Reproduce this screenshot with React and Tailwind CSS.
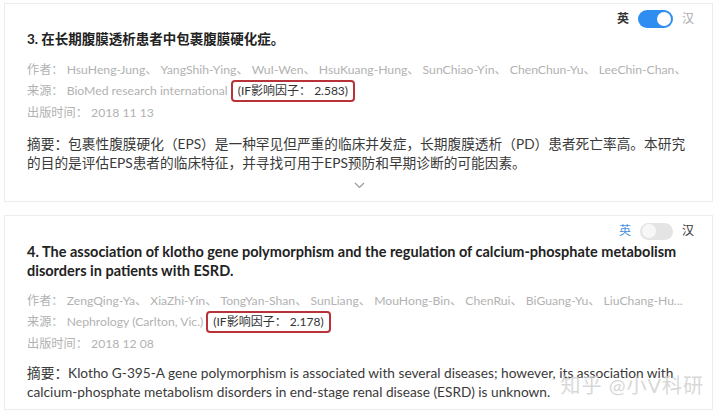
import React from "react";

// Shared font stacks
const FONT = { fontFamily: '"Lato", "Noto Sans CJK SC", sans-serif' };

// Papers shown in the list
const papers = [
  {
    titleLines: ["3. 在长期腹膜透析患者中包裹腹膜硬化症。"],
    titleSize: "text-[13.5px]",
    authors:
      "HsuHeng-Jung、 YangShih-Ying、 WuI-Wen、 HsuKuang-Hung、 SunChiao-Yin、 ChenChun-Yu、 LeeChin-Chan、",
    source: "BioMed research international",
    impact: "2.583",
    date: "2018 11 13",
    abstractLines: [
      "摘要：包裹性腹膜硬化（EPS）是一种罕见但严重的临床并发症，长期腹膜透析（PD）患者死亡率高。本研究",
      "的目的是评估EPS患者的临床特征，并寻找可用于EPS预防和早期诊断的可能因素。",
    ],
    abstractGap: "mt-[11px]",
    bottom: "pb-[12px]",
    english: true,
    expandable: true,
  },
  {
    titleLines: [
      "4. The association of klotho gene polymorphism and the regulation of calcium-phosphate metabolism",
      "disorders in patients with ESRD.",
    ],
    titleSize: "text-[14.5px]",
    authors:
      "ZengQing-Ya、 XiaZhi-Yin、 TongYan-Shan、 SunLiang、 MouHong-Bin、 ChenRui、 BiGuang-Yu、 LiuChang-Hu...",
    source: "Nephrology (Carlton, Vic.)",
    impact: "2.178",
    date: "2018 12 08",
    abstractLines: [
      "摘要：Klotho G-395-A gene polymorphism is associated with several diseases; however, its association with",
      "calcium-phosphate metabolism disorders in end-stage renal disease (ESRD) is unknown.",
    ],
    abstractGap: "mt-[9px]",
    bottom: "pb-[8px]",
    english: false,
    expandable: false,
  },
];

function LangToggle({ on }) {
  return (
    <div className="flex items-center justify-end gap-[9px] pr-[18px] h-[18px] text-[12px]">
      <span className={on ? "text-[#333] font-bold" : "text-[#4a90e2]"}>英</span>
      {on ? (
        <div className="w-[35px] h-[18px] rounded-full bg-[#2f8cf0] flex items-center justify-end pr-[2px]">
          <div className="w-[14px] h-[14px] rounded-full bg-white" />
        </div>
      ) : (
        <div className="w-[33px] h-[17px] rounded-full bg-[#e4e4e4] flex items-center pl-[2px]">
          <div className="w-[14px] h-[14px] rounded-full bg-[#f7f7f7]" />
        </div>
      )}
      <span className={on ? "text-[#aaa]" : "text-[#333]"}>汉</span>
    </div>
  );
}

function PaperCard({ paper }) {
  return (
    <div className={`relative border border-[#ececec] bg-white pt-[6px] ${paper.bottom}`}>
      <LangToggle on={paper.english} />
      <div className="pl-[22px] pr-[20px]">
        {/* title */}
        <div className={`mt-[2px] ${paper.titleSize} leading-[19px] font-bold text-[#222] whitespace-nowrap`}>
          {paper.titleLines.map((l) => (
            <div key={l}>{l}</div>
          ))}
        </div>

        {/* meta rows */}
        <div className="mt-[10px] text-[12.2px] text-[#b2b2b2] whitespace-nowrap">
          <div className="leading-[21px] overflow-hidden">作者： {paper.authors}</div>
          <div className="flex items-center h-[22px]">
            <span>来源： {paper.source}</span>
            <span className="ml-[3px] border-2 border-[#b8323a] rounded-[4px] px-[5px] h-[22px] flex items-center text-[12px] text-[#333]">
              (IF影响因子： {paper.impact})
            </span>
          </div>
          <div className="leading-[21px]">出版时间： {paper.date}</div>
        </div>

        {/* abstract */}
        <div className={`${paper.abstractGap} text-[13.7px] leading-[19px] text-[#3a3a3a] whitespace-nowrap`}>
          {paper.abstractLines.map((l) => (
            <div key={l}>{l}</div>
          ))}
        </div>
      </div>

      {paper.expandable && (
        <div className="flex justify-center mt-[10px] pl-[2px]">
          <svg width="11" height="7" viewBox="0 0 11 7">
            <path d="M1 1l4.5 4.5L10 1" fill="none" stroke="#999" strokeWidth="1.2" />
          </svg>
        </div>
      )}

      {!paper.expandable && (
        <span className="absolute right-[8px] bottom-[12px] text-[20px] leading-[24px] text-[#cfcfcf] opacity-80 tracking-[1px]">
          知乎 @小V科研
        </span>
      )}
    </div>
  );
}

export default function App() {
  return (
    <div className="w-[720px] h-[415px] bg-white overflow-hidden" style={FONT}>
      <div className="w-[709px] ml-[4px] pt-[3px] flex flex-col gap-[13px]">
        {papers.map((p) => (
          <PaperCard key={p.impact} paper={p} />
        ))}
      </div>
    </div>
  );
}
